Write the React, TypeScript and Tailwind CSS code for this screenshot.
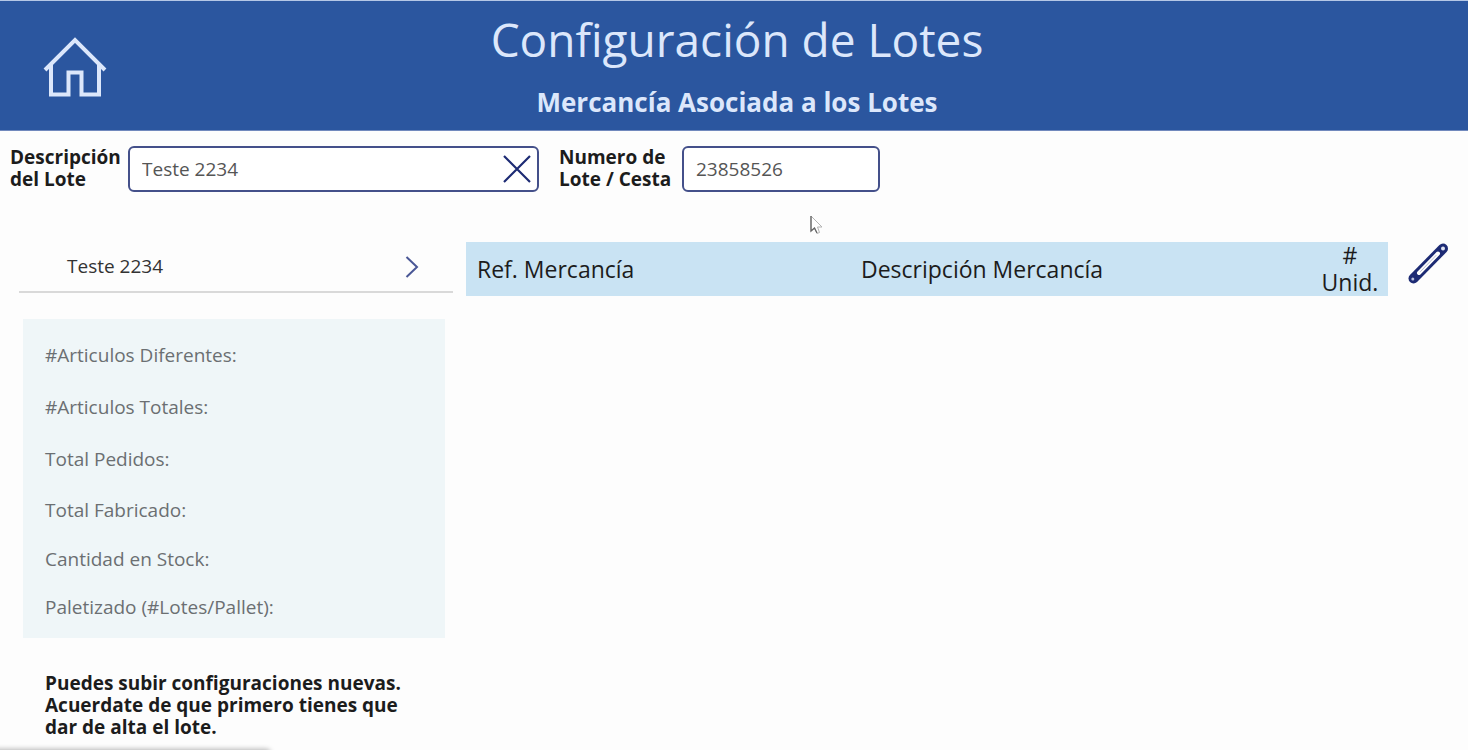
import { useState } from "react";

const stats = [
  { label: "#Articulos Diferentes:", height: "h-[52px]" },
  { label: "#Articulos Totales:", height: "h-[52px]" },
  { label: "Total Pedidos:", height: "h-[52px]" },
  { label: "Total Fabricado:", height: "h-[50px]" },
  { label: "Cantidad en Stock:", height: "h-12" },
  { label: "Paletizado (#Lotes/Pallet):", height: "h-12" },
];

function HomeIcon() {
  return (
    <svg viewBox="0 0 64 62" className="h-[62px] w-16" fill="none" stroke="currentColor" strokeWidth="4" aria-hidden="true">
      <path d="M2 35 32 5 62 35" />
      <path d="M8 30V59.500H25.500V37.500H38.500V59.500H56V30" />
    </svg>
  );
}

function CloseIcon() {
  return (
    <svg viewBox="0 0 28 28" className="size-7" fill="none" stroke="currentColor" strokeWidth="2.200" aria-hidden="true">
      <path d="M1 1 27 27M27 1 1 27" />
    </svg>
  );
}

function ChevronIcon() {
  return (
    <svg viewBox="0 0 14 22" className="h-[22px] w-3.5" fill="none" stroke="currentColor" strokeWidth="2" aria-hidden="true">
      <path d="M1.500 1 12 11 1.500 21" />
    </svg>
  );
}

function PencilIcon() {
  return (
    <svg viewBox="0 0 40 41" className="h-[41px] w-10" fill="none" stroke="currentColor" strokeLinejoin="round" strokeLinecap="round" aria-hidden="true">
      <path d="M5.500 35.500 35 5.500" strokeWidth="10" />
      <path d="M11 30 30 10.500" strokeWidth="4" stroke="#fdfdfd" />
      <path d="M12.500 28.500 28 12.500" strokeWidth="1" opacity=".3" />
      <circle cx="35" cy="5.500" r="2" stroke="none" fill="#dfe3f2" />
      <circle cx="4.800" cy="36" r="1.500" stroke="none" fill="#b9c0de" />
    </svg>
  );
}

function Pointer() {
  return (
    <svg viewBox="0 0 14 20" className="pointer-events-none absolute top-[215px] left-[810px] h-5 w-3.5" aria-hidden="true">
      <path d="M1 1V16L4.500 13 7 18.500 9.500 17.500 7.500 12H12Z" fill="#ffffff" stroke="#b3b3b3" />
      <path d="M1 1V16L4.500 13 7 18" fill="none" stroke="#666666" strokeWidth="1.300" />
    </svg>
  );
}

export default function App() {
  const [description, setDescription] = useState("Teste 2234");
  const [lot, setLot] = useState("23858526");

  return (
    <div className="relative min-h-screen overflow-hidden bg-[#fdfdfd] font-['Open_Sans',sans-serif] text-[#1c1c1c]">
      <header className="grid h-[131px] grid-cols-[150px_1fr_144px] items-center border-y border-t-[#b5c7e6] border-b-[#7189bd] bg-[#2b569f] text-[#dce7fb]">
        <button type="button" aria-label="Inicio" className="justify-self-center">
          <HomeIcon />
        </button>
        <div className="self-start text-center">
          <h1 className="pt-2 text-[46px] leading-[60px]">Configuración de Lotes</h1>
          <p className="pt-[15px] text-[26px] leading-9 font-bold">Mercancía Asociada a los Lotes</p>
        </div>
      </header>

      <main>
        <form className="flex h-[111px] items-start pt-[15px] pl-2.5" onSubmit={(e) => e.preventDefault()}>
          <label htmlFor="description" className="w-[118px] shrink-0 text-[19px] leading-[22px] font-bold">
            Descripción
            <br />
            del Lote
          </label>
          <div className="flex h-[46px] w-[411px] items-center rounded-md border-2 border-[#44508a] bg-white pr-1.5 pl-3">
            <input
              id="description"
              value={description}
              onChange={(e) => setDescription(e.target.value)}
              className="min-w-0 flex-1 bg-transparent text-[19px] text-[#555555] outline-none"
            />
            <button type="button" aria-label="Borrar" onClick={() => setDescription("")} className="text-[#1d2b74]">
              <CloseIcon />
            </button>
          </div>
          <label htmlFor="lot" className="ml-5 w-[123px] shrink-0 text-[19px] leading-[22px] font-bold">
            Numero de
            <br />
            Lote / Cesta
          </label>
          <input
            id="lot"
            value={lot}
            onChange={(e) => setLot(e.target.value)}
            className="h-[46px] w-[198px] rounded-md border-2 border-[#44508a] bg-white px-3 text-[19px] text-[#555555] outline-none"
          />
        </form>

        <div className="flex items-start">
          <aside className="w-[466px] shrink-0">
            <button type="button" className="ml-[19px] flex h-[51px] w-[434px] items-center justify-between border-b-2 border-[#d9d9d9] pr-[34px] pl-12 text-[19px] text-[#333333]">
              <span>Teste 2234</span>
              <span className="text-[#4a5796]">
                <ChevronIcon />
              </span>
            </button>
            <ul className="mt-[26px] ml-[23px] h-[319px] w-[422px] bg-[#eff6f8] pt-2.5 pl-[22px] text-[19px] text-[#6b6f72]">
              {stats.map((stat) => (
                <li key={stat.label} className={`flex items-center ${stat.height}`}>
                  {stat.label}
                </li>
              ))}
            </ul>
            <p className="mt-[34px] ml-[45px] text-[19px] leading-[22px] font-bold">
              Puedes subir configuraciones nuevas.
              <br />
              Acuerdate de que primero tienes que
              <br />
              dar de alta el lote.
            </p>
          </aside>

          <section className="flex min-w-0 flex-1 items-start gap-5 pr-5">
            <table className="h-[54px] flex-1 table-fixed bg-[#c9e3f3] text-[23px]">
              <thead>
                <tr>
                  <th scope="col" className="w-[384px] p-0 pl-[11px] text-left font-normal">Ref. Mercancía</th>
                  <th scope="col" className="p-0 pl-[11px] text-left font-normal">Descripción Mercancía</th>
                  <th scope="col" className="w-[76px] p-0 text-center leading-[27px] font-normal">
                    #<br />
                    Unid.
                  </th>
                </tr>
              </thead>
            </table>
            <button type="button" aria-label="Editar" className="mt-px text-[#1d2b74]">
              <PencilIcon />
            </button>
          </section>
        </div>
      </main>

      <Pointer />
      <div className="absolute -bottom-2 -left-4 h-2 w-[286px] rounded-md shadow-[0_0_5px_1px_#b5b5b5]" />
    </div>
  );
}
